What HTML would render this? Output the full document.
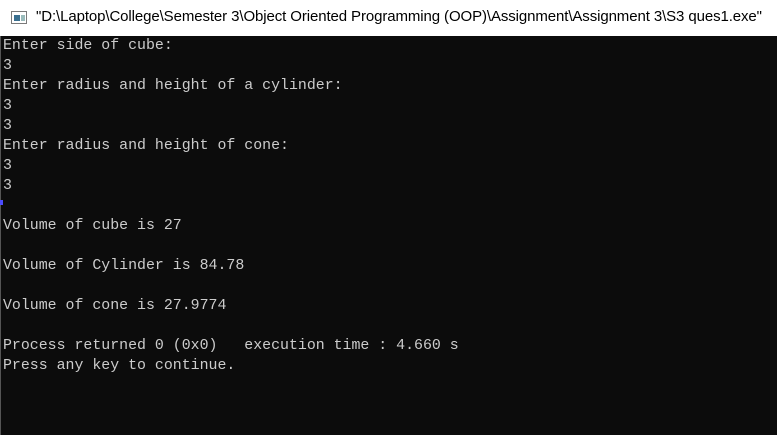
<!DOCTYPE html>
<html><head><style>
html,body{margin:0;padding:0;width:777px;height:435px;overflow:hidden;background:#0c0c0c}
.title{position:absolute;left:0;top:0;width:777px;height:36px;background:#fff}
.title span{position:absolute;left:36px;top:8px;font:15px "Liberation Sans",sans-serif;color:#000;white-space:nowrap;letter-spacing:-0.1px}
.icon{position:absolute;left:11px;top:11px;width:16px;height:13px;border:1px solid #7a7a7a;box-sizing:border-box;background:#fff}
.icon i{position:absolute;left:2px;top:3px;width:6px;height:6px;background:#3a6f8f}
.icon b{position:absolute;left:9px;top:3px;width:4px;height:6px;background:#9bb}
.con{position:absolute;left:0;top:36px;width:777px;height:399px;background:#0c0c0c;border-left:1px solid #555;box-sizing:border-box}
pre{margin:0;position:absolute;left:2px;top:0px;font:14.9px/20px "Liberation Mono",monospace;color:#cccccc}
.mark{position:absolute;left:0;top:200px;width:3px;height:5px;background:#4c4cff}
</style></head><body>
<div class="title"><div class="icon"><i></i><b></b></div><span>"D:\Laptop\College\Semester 3\Object Oriented Programming (OOP)\Assignment\Assignment 3\S3 ques1.exe"</span></div>
<div class="con"><pre>Enter side of cube:
3
Enter radius and height of a cylinder:
3
3
Enter radius and height of cone:
3
3

Volume of cube is 27

Volume of Cylinder is 84.78

Volume of cone is 27.9774

Process returned 0 (0x0)   execution time : 4.660 s
Press any key to continue.</pre></div>
<div class="mark"></div>
</body></html>
